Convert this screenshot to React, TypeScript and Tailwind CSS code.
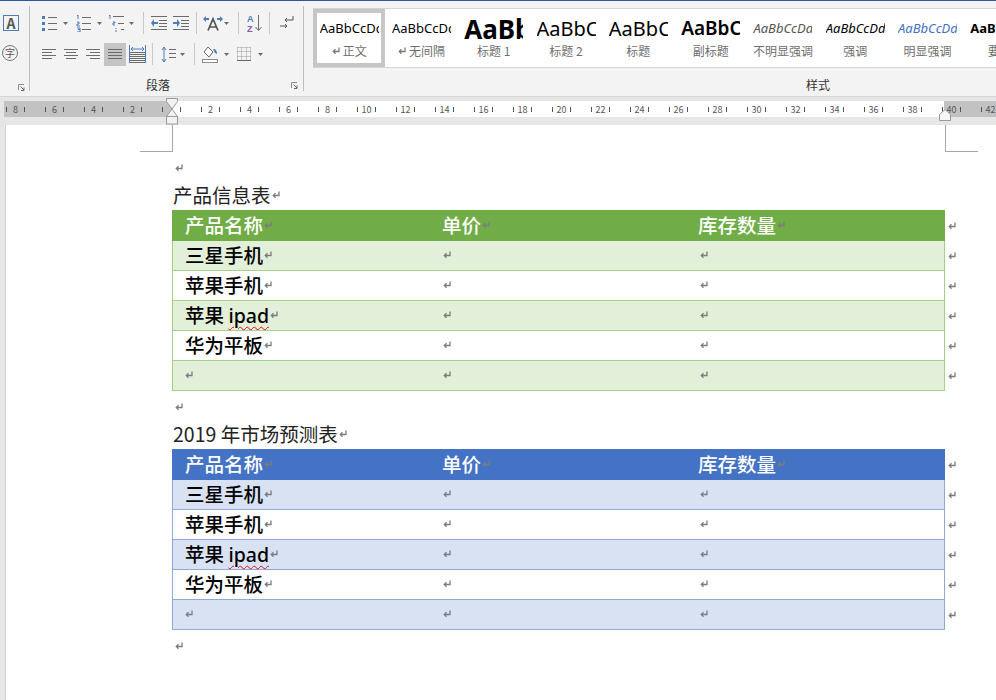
import React from 'react'

const blue = '#4a7ebb'
const grey = '#6b6b6b'

function Caret() {
  return (
    <svg width="5" height="3" viewBox="0 0 5 3" className="shrink-0">
      <path d="M0 0h5L2.5 3z" fill={grey} />
    </svg>
  )
}

function Sep({ className }: { className: string }) {
  return <div className={`h-[22px] w-px shrink-0 bg-[#c8c8c8] ${className}`} />
}

function Lines({ rows, w, h = 16 }: { rows: [number, number, number][]; w: number; h?: number }) {
  return (
    <svg width={w} height={h} viewBox={`0 0 ${w} ${h}`} className="shrink-0">
      {rows.map(([x, y, l], i) => (
        <rect key={i} x={x} y={y} width={l} height="1" fill={grey} />
      ))}
    </svg>
  )
}

function Bullets() {
  return (
    <svg width="16" height="18" viewBox="0 0 16 18" className="shrink-0">
      {[3, 9, 15].map((y) => (
        <g key={y}>
          <rect x="1" y={y - 1} width="3" height="3" fill={blue} />
          <rect x="7" y={y} width="9" height="1" fill={grey} />
        </g>
      ))}
    </svg>
  )
}

function Numbers() {
  return (
    <svg width="15" height="18" viewBox="0 0 15 18" className="shrink-0">
      <path d="M1 2l1-1v4M1 8h2v2H1v2h3M1 14h3v1.5H2h2V18H1" fill="none" stroke={blue} />
      {[3, 9, 15].map((y) => (
        <rect key={y} x="6" y={y} width="9" height="1" fill={grey} />
      ))}
    </svg>
  )
}

function MultiLevel() {
  return (
    <svg width="17" height="18" viewBox="0 0 17 18" className="shrink-0">
      <path d="M1 2l1-1v4M5 8h2v1H5v2h2M8 14v1M8 16v2" fill="none" stroke={blue} />
      <rect x="5" y="2" width="11" height="1" fill={grey} />
      <rect x="10" y="9" width="6" height="1" fill={grey} />
      <rect x="13" y="15" width="3" height="1" fill={grey} />
    </svg>
  )
}

function Indent({ flip }: { flip?: boolean }) {
  return (
    <svg width="16" height="14" viewBox="0 0 16 14" className="shrink-0">
      {[0, 13].map((y) => (
        <rect key={y} x="0" y={y} width="16" height="1" fill={grey} />
      ))}
      {[4, 7, 10].map((y) => (
        <rect key={y} x="8" y={y} width="8" height="1" fill={grey} />
      ))}
      <path d={flip ? 'M0 6h4V3l3 4-3 4V8H0z' : 'M7 6H3V3L0 7l3 4V8h4z'} fill={blue} />
    </svg>
  )
}

function LayoutIcon() {
  return (
    <svg width="20" height="16" viewBox="0 0 20 16" className="shrink-0">
      <path d="M5 15.500L10 4l5 11.500M7 12h6" fill="none" stroke="#555" strokeWidth="1.7" />
      <path d="M0 4l3-3v2h3v2H3v2zM20 4l-3-3v2h-3v2h3v2z" fill={blue} />
    </svg>
  )
}

function SortIcon() {
  return (
    <svg width="15" height="18" viewBox="0 0 15 18" className="shrink-0">
      <text x="0" y="8" fontSize="9" fontWeight="700" fontFamily="Liberation Sans" fill={blue}>
        A
      </text>
      <text x="0" y="17.5" fontSize="9" fontWeight="700" fontFamily="Liberation Sans" fill="#7d5aa6">
        Z
      </text>
      <path d="M11.5 1v15M8.500 13l3 3.500 3-3.500" fill="none" stroke={grey} />
    </svg>
  )
}

function MarksIcon() {
  return (
    <svg width="14" height="14" viewBox="0 0 14 14" className="shrink-0">
      <path d="M13 0v4H5M7 2L5 4l2 2" fill="none" stroke="#555" />
      <path d="M0 10h7M5 8l2 2-2 2" fill="none" stroke="#555" />
    </svg>
  )
}

function Distributed() {
  return (
    <svg width="17" height="18" viewBox="0 0 17 18" className="shrink-0">
      <rect x="0" y="0" width="1" height="18" fill={blue} />
      <rect x="16" y="0" width="1" height="18" fill={blue} />
      <path d="M2 4h13M4 2L2 4l2 2M13 2l2 2-2 2" fill="none" stroke={blue} />
      {[7, 9, 11, 13, 15, 17].map((y) => (
        <rect key={y} x="1" y={y} width="15" height="1" fill={grey} />
      ))}
    </svg>
  )
}

function SpacingIcon() {
  return (
    <svg width="15" height="17" viewBox="0 0 15 17" className="shrink-0">
      <path d="M3 1v15M1 4l2-3 2 3M1 13l2 3 2-3" fill="none" stroke={blue} />
      {[3, 7, 11].map((y) => (
        <rect key={y} x="8" y={y} width="7" height="1" fill={grey} />
      ))}
    </svg>
  )
}

function ShadingIcon() {
  return (
    <svg width="16" height="17" viewBox="0 0 16 17" className="shrink-0">
      <path d="M6 1l5 5-4 5-5-5z" fill="#fff" stroke={grey} />
      <path d="M11 3c3 0 4 2 4 5l-2-1z" fill={blue} />
      <rect x="0.5" y="13.5" width="15" height="3" fill="#fff" stroke="#8a8a8a" />
    </svg>
  )
}

function BordersIcon() {
  return (
    <svg width="14" height="14" viewBox="0 0 14 14" className="shrink-0">
      <path d="M.5 .5h13M.5 .5v13M13.500 .5v13M4.500 .5v13M9.500 .5v13M.5 4.500h13M.5 9.500h13" fill="none" stroke="#999" strokeDasharray="1 1" />
      <path d="M0 13.500h14" stroke="#666" />
    </svg>
  )
}

function Launcher() {
  return (
    <svg width="7" height="7" viewBox="0 0 7 7" className="shrink-0">
      <path d="M.5 6V.5H6" fill="none" stroke="#8a8a8a" />
      <path d="M2.500 2.500L6 6M6 3.500V6.500H3" fill="none" stroke="#666" />
    </svg>
  )
}

function ParaMark({ className = '' }: { className?: string }) {
  return (
    <svg width="8" height="8" viewBox="0 0 8 8" className={`shrink-0 ${className}`}>
      <path d="M7 .5v4H1.500M3.500 2.300L1.300 4.500l2.200 2.200" fill="none" stroke="#7c7c7c" strokeWidth="1.3" />
    </svg>
  )
}

const styleItems = [
  { label: '正文', mark: true, cls: 'text-[13px] text-black', sel: true },
  { label: '无间隔', mark: true, cls: 'text-[13px] text-black' },
  { label: '标题 1', cls: 'text-[26px] font-bold text-black' },
  { label: '标题 2', cls: 'text-[20px] text-black' },
  { label: '标题', cls: 'text-[20px] text-black' },
  { label: '副标题', cls: 'text-[19px] font-semibold text-black' },
  { label: '不明显强调', cls: 'text-[13px] italic text-[#555]' },
  { label: '强调', cls: 'text-[13px] italic text-black' },
  { label: '明显强调', cls: 'text-[13px] italic text-[#4472c4]' },
  { label: '要点', cls: 'text-[13px] font-bold text-black' },
]

function Ribbon() {
  return (
    <div className="flex h-[95px] shrink-0 bg-[#f3f3f3]">
      <div className="flex w-[29px] shrink-0 flex-col pl-[3px] pt-[14px]">
        <div className="flex h-[16px] w-[16px] items-center justify-center border border-[#4a7ebb] text-[14px] font-bold leading-none text-[#555]">
          A
        </div>
        <div className="ml-[-1px] mt-[14px] flex h-[16px] w-[16px] items-center justify-center rounded-full border border-[#777] text-[10px] leading-none text-[#555]">
          字
        </div>
        <div className="ml-[15px] mt-[23px]">
          <Launcher />
        </div>
      </div>
      <div className="my-[5px] w-px shrink-0 bg-[#bdbdbd]" />
      <div className="relative w-[273px] shrink-0">
        <div className="mt-[13px] flex h-[18px] items-center">
          <div className="ml-[11px]"><Bullets /></div>
          <div className="ml-[6px]"><Caret /></div>
          <div className="ml-[8px]"><Numbers /></div>
          <div className="ml-[6px]"><Caret /></div>
          <div className="ml-[6px]"><MultiLevel /></div>
          <div className="ml-[4px]"><Caret /></div>
          <Sep className="ml-[9px]" />
          <div className="ml-[7px]"><Indent /></div>
          <div className="ml-[6px]"><Indent flip /></div>
          <Sep className="ml-[7px]" />
          <div className="ml-[6px]"><LayoutIcon /></div>
          <div className="ml-[1px]"><Caret /></div>
          <Sep className="ml-[9px]" />
          <div className="ml-[8px]"><SortIcon /></div>
          <Sep className="ml-[7px]" />
          <div className="ml-[10px]"><MarksIcon /></div>
        </div>
        <div className="mt-[10px] flex h-[24px] items-center">
          <div className="ml-[12px]">
            <Lines w={14} h={11} rows={[[0, 0, 14], [0, 3, 10], [0, 6, 14], [0, 9, 10]]} />
          </div>
          <div className="ml-[8px]">
            <Lines w={14} h={11} rows={[[0, 0, 14], [2, 3, 10], [0, 6, 14], [2, 9, 10]]} />
          </div>
          <div className="ml-[8px]">
            <Lines w={14} h={11} rows={[[0, 0, 14], [4, 3, 10], [0, 6, 14], [4, 9, 10]]} />
          </div>
          <div className="ml-[4px] flex h-[23px] w-[22px] shrink-0 items-center justify-center bg-[#c4c4c4]">
            <Lines w={14} h={10} rows={[[0, 0, 14], [0, 3, 14], [0, 6, 14], [0, 9, 14]]} />
          </div>
          <div className="ml-[3px]"><Distributed /></div>
          <Sep className="ml-[6px]" />
          <div className="ml-[8px]"><SpacingIcon /></div>
          <div className="ml-[4px]"><Caret /></div>
          <Sep className="ml-[9px]" />
          <div className="ml-[7px]"><ShadingIcon /></div>
          <div className="ml-[6px]"><Caret /></div>
          <div className="ml-[8px]"><BordersIcon /></div>
          <div className="ml-[7px]"><Caret /></div>
        </div>
        <div className="mt-[11px] flex items-center pl-[116px] pr-[5px]">
          <span className="w-[26px] text-[12px] leading-[16px] text-[#333]">段落</span>
          <span className="flex-1" />
          <Launcher />
        </div>
      </div>
      <div className="my-[5px] w-px shrink-0 bg-[#bdbdbd]" />
      <div className="min-w-0 flex-1 pl-[9px] pt-[7px]">
        <div className="flex h-[60px] overflow-hidden border-y border-[#d4d4d4] bg-white">
          {styleItems.map((s) => (
            <div
              key={s.label}
              className={`flex h-[58px] w-[72.3px] shrink-0 flex-col items-center overflow-hidden ${
                s.sel ? 'border-4 border-[#c6c6c6] pt-[4px]' : 'pt-[8px]'
              }`}
            >
              <div className="flex h-[23px] w-[59px] items-center justify-start overflow-hidden">
                <span className={`whitespace-nowrap font-['Noto_Sans','Liberation_Sans',sans-serif] leading-none ${s.cls}`}>
                  AaBbCcDd
                </span>
              </div>
              <div className="mt-[3px] flex items-center gap-[3px] whitespace-nowrap text-[12px] leading-[16px] text-[#6e6e6e]">
                {s.mark && <ParaMark />}
                {s.label}
              </div>
            </div>
          ))}
        </div>
        <div className="mt-[9px] pl-[493px] text-[12px] leading-[16px] text-[#333]">样式</div>
      </div>
    </div>
  )
}

const rulerNumbers = [8, 6, 4, 2, 0, ...Array.from({ length: 21 }, (_, i) => (i + 1) * 2)]

function Ruler() {
  return (
    <div className="relative h-[29px] shrink-0 border-t border-[#d6d6d6] bg-[#e6e6e6] pt-[4px]">
      <div className="flex h-[16px]">
        <div className="w-[4px]" />
        <div className="w-[168px] bg-[#c2c2c2]" />
        <div className="w-[772px] bg-white" />
        <div className="flex-1 bg-[#c2c2c2]" />
      </div>
      <div className="absolute left-[5.75px] top-[4px] flex h-[16px] gap-[19.5px]">
        {rulerNumbers.map((n, i) => (
          <div key={i} className="flex h-[16px] w-[19.5px] shrink-0 items-center justify-between">
            <div className="h-[5px] w-px bg-[#555]" />
            <span className="text-[9px] leading-none text-[#555]">{n > 0 ? n : ''}</span>
            <div className="h-[5px] w-px bg-[#555]" />
          </div>
        ))}
      </div>
      <svg width="14" height="28" viewBox="0 0 14 28" className="absolute left-[165px] top-[1px]">
        <path d="M1.500 .5h11v3L7 11 1.500 3.500z" fill="#f2f2f2" stroke="#9a9a9a" />
        <path d="M7 11l5.500 7.500h-11z" fill="#f2f2f2" stroke="#9a9a9a" />
        <rect x="1.500" y="18.500" width="11" height="7.500" fill="#f2f2f2" stroke="#9a9a9a" />
      </svg>
      <svg width="12" height="12" viewBox="0 0 12 12" className="absolute left-[939px] top-[12px]">
        <path d="M.5 11.500V5.500L6 .5l5.500 5v6z" fill="#f7f7f7" stroke="#9a9a9a" />
      </svg>
    </div>
  )
}

const rows = ['三星手机', '苹果手机', '苹果 ipad', '华为平板', '']

function DocTable({ head, band, line }: { head: string; band: string; line: string }) {
  return (
    <div className="w-[790px]">
      <div className="flex h-[31px]">
        <div className={`grid w-[773px] grid-cols-[258px_256px_259px] items-center pb-[2px] text-[19.5px] font-medium leading-none text-white ${head}`}>
          {['产品名称', '单价', '库存数量'].map((h, i) => (
            <div key={h} className={`flex items-center gap-[1px] ${i === 0 ? 'pl-[13px]' : 'pl-[12px]'}`}>
              {h}
              <ParaMark />
            </div>
          ))}
        </div>
        <div className="flex items-center pl-[3px]">
          <ParaMark />
        </div>
      </div>
      {rows.map((r, i) => (
        <div key={i} className="flex h-[30px]">
          <div className={`grid w-[773px] grid-cols-[258px_256px_259px] items-center border-x border-b pb-[1px] text-[19.5px] font-medium leading-none text-black ${line} ${i % 2 === 0 ? band : 'bg-white'}`}>
            <div className="flex items-center gap-[1px] pl-[12px]">
              {r === '苹果 ipad' ? (
                <span>
                  苹果{' '}
                  <span className="font-['Noto_Sans',sans-serif] underline decoration-[#e01010] decoration-wavy decoration-1 underline-offset-3">
                    ipad
                  </span>
                </span>
              ) : (
                r
              )}
              <ParaMark />
            </div>
            <div className="pl-[12px]">
              <ParaMark />
            </div>
            <div className="pl-[13px]">
              <ParaMark />
            </div>
          </div>
          <div className="flex items-center pl-[3px]">
            <ParaMark />
          </div>
        </div>
      ))}
    </div>
  )
}

export default function App() {
  return (
    <div className="flex h-[700px] w-[996px] flex-col overflow-hidden bg-white font-['Noto_Sans_CJK_SC','Noto_Sans',sans-serif]">
      <div className="h-px shrink-0 bg-[#2b579a]" />
      <Ribbon />
      <Ruler />
      <div className="flex min-h-0 flex-1">
        <div className="w-[6px] shrink-0 border-r border-[#d0d0d0] bg-[#e6e6e6]" />
        <div className="relative flex-1 pl-[166px]">
          <div className="absolute left-[134px] top-0 h-[27px] w-[33px] border-b border-r border-[#a6a6a6]" />
          <div className="absolute left-[939px] top-0 h-[27px] w-[33px] border-b border-l border-[#a6a6a6]" />
          <div className="flex h-[58px] items-center pl-[3px] pt-[27px]">
            <ParaMark />
          </div>
          <div className="flex h-[27px] items-center gap-[1px] pb-[4px] pl-[1px] text-[19.5px] leading-none text-[#222]">
            产品信息表
            <ParaMark />
          </div>
          <DocTable head="bg-[#70ad47]" band="bg-[#e2efd9]" line="border-[#a8d08d]" />
          <div className="flex h-[31px] items-center pl-[3px]">
            <ParaMark />
          </div>
          <div className="flex h-[27px] items-center gap-[1px] pb-[4px] pl-[1px] text-[19.5px] leading-none text-[#222]">
            2019 年市场预测表
            <ParaMark />
          </div>
          <DocTable head="bg-[#4472c4]" band="bg-[#d9e2f3]" line="border-[#8eaadb]" />
          <div className="flex h-[31px] items-center pl-[3px]">
            <ParaMark />
          </div>
        </div>
      </div>
    </div>
  )
}
